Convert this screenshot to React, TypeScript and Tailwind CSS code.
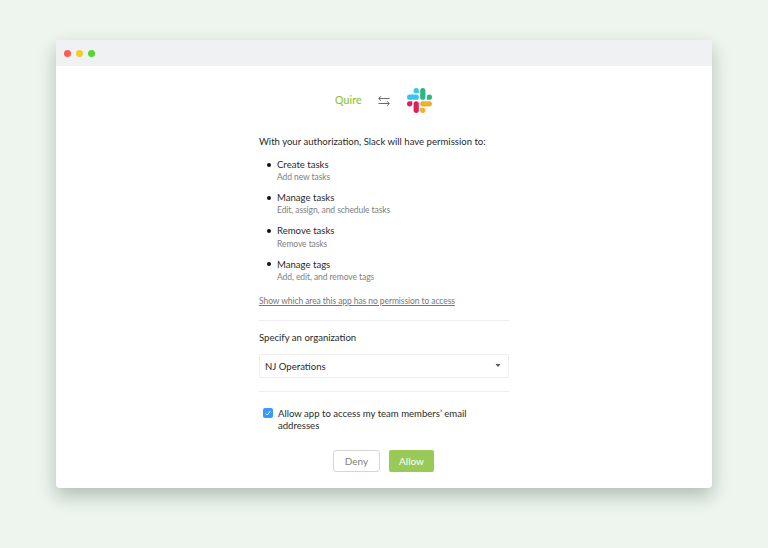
const permissions = [
  { title: "Create tasks", detail: "Add new tasks" },
  { title: "Manage tasks", detail: "Edit, assign, and schedule tasks" },
  { title: "Remove tasks", detail: "Remove tasks" },
  { title: "Manage tags", detail: "Add, edit, and remove tags" },
];

function SlackLogo() {
  return (
    <svg className="h-[25px] w-[25px]" viewBox="0 0 24 24">
      <path fill="#E01E5A" d="M5.042 15.165a2.528 2.528 0 0 1-2.52 2.523A2.528 2.528 0 0 1 0 15.165a2.527 2.527 0 0 1 2.522-2.52h2.52v2.52zM6.313 15.165a2.527 2.527 0 0 1 2.521-2.52 2.527 2.527 0 0 1 2.521 2.52v6.313A2.528 2.528 0 0 1 8.834 24a2.528 2.528 0 0 1-2.521-2.522v-6.313z" />
      <path fill="#36C5F0" d="M8.834 5.042a2.528 2.528 0 0 1-2.521-2.52A2.528 2.528 0 0 1 8.834 0a2.528 2.528 0 0 1 2.521 2.522v2.52H8.834zM8.834 6.313a2.528 2.528 0 0 1 2.521 2.521 2.528 2.528 0 0 1-2.521 2.521H2.522A2.528 2.528 0 0 1 0 8.834a2.528 2.528 0 0 1 2.522-2.521h6.312z" />
      <path fill="#2EB67D" d="M18.956 8.834a2.528 2.528 0 0 1 2.522-2.521A2.528 2.528 0 0 1 24 8.834a2.528 2.528 0 0 1-2.522 2.521h-2.522V8.834zM17.688 8.834a2.528 2.528 0 0 1-2.523 2.521 2.527 2.527 0 0 1-2.52-2.521V2.522A2.527 2.527 0 0 1 15.165 0a2.528 2.528 0 0 1 2.523 2.522v6.312z" />
      <path fill="#ECB22E" d="M15.165 18.956a2.528 2.528 0 0 1 2.523 2.522A2.528 2.528 0 0 1 15.165 24a2.527 2.527 0 0 1-2.52-2.522v-2.522h2.52zM15.165 17.688a2.527 2.527 0 0 1-2.52-2.523 2.526 2.526 0 0 1 2.52-2.52h6.313A2.527 2.527 0 0 1 24 15.165a2.528 2.528 0 0 1-2.522 2.523h-6.313z" />
    </svg>
  );
}

function ExchangeIcon() {
  return (
    <svg className="ml-4 mr-[17px] h-3 w-3" viewBox="0 0 12 12" fill="none" stroke="#6b6b6b" strokeWidth="1">
      <path d="M11.5 3.5H.8M3 1.2 .7 3.5 3 5.8M.5 8.5h10.7M9 6.2l2.3 2.3L9 10.8" />
    </svg>
  );
}

export default function App() {
  return (
    <div className="h-[548px] w-[768px] bg-[#edf5ee] px-14 pt-10 font-['Lato',sans-serif] text-[#2a2a2a]">
      <div className="h-[448px] overflow-hidden rounded-[4px] bg-white shadow-[0_8px_18px_rgba(10,30,10,0.26)]">
        <header className="flex h-[26px] items-center gap-[5px] bg-[#eff1f3] pl-2 pt-px">
          <span className="h-[7px] w-[7px] rounded-full bg-[#ff5b50]" />
          <span className="h-[7px] w-[7px] rounded-full bg-[#f6c92e]" />
          <span className="h-[7px] w-[7px] rounded-full bg-[#55d82c]" />
        </header>
        <main className="ml-[203px] w-[250px] whitespace-nowrap pt-[22px] text-[9.57px] leading-[12px]">
          <div className="flex h-[25px] items-center pl-[76px]">
            <svg className="h-4 w-[27px]" viewBox="0 0 27 16">
              <text x="0" y="11.4" textLength="26.5" lengthAdjust="spacing" fill="#8cc534" stroke="#8cc534" strokeWidth="0.12" className="font-['Lato',sans-serif] text-[10.5px]">Quire</text>
            </svg>
            <ExchangeIcon />
            <SlackLogo />
          </div>
          <p className="mt-[23px]">With your authorization, Slack will have permission to:</p>
          <ul className="mt-[10px] flex flex-col gap-[8.33px] pl-2">
            {permissions.map((p) => (
              <li key={p.title} className="flex gap-[6px]">
                <span className="mt-[4.5px] h-1 w-1 shrink-0 rounded-full bg-[#111]" />
                <div>
                  <div className="pt-[0.8px]">{p.title}</div>
                  <div className="mt-[1.2px] text-[8.5px] leading-[11px] tracking-[-0.075px] text-[#808080]">{p.detail}</div>
                </div>
              </li>
            ))}
          </ul>
          <a className="mt-[12px] block text-[8.5px] leading-[12px] tracking-[-0.075px] text-[#777] underline">Show which area this app has no permission to access</a>
          <hr className="mt-[13px] border-[#eeeeee]" />
          <p className="mt-[11px]">Specify an organization</p>
          <div className="mt-[10px] flex h-6 items-center justify-between rounded-[2px] border border-[#eeeeee] pl-[5px] pr-[7px]">
            <span className="pt-[2px]">NJ Operations</span>
            <svg className="h-[3px] w-[6px]" viewBox="0 0 6 3"><path d="M0.5 0h5L3 3z" fill="#555" /></svg>
          </div>
          <hr className="mt-[13px] border-[#eeeeee]" />
          <label className="mt-[16px] flex gap-[5px] pl-[4px] leading-[12px]">
            <span className="flex h-[10px] w-[10px] items-center justify-center rounded-[2px] bg-[#3b99fc]">
              <svg className="h-[10px] w-[10px]" viewBox="0 0 10 10" fill="none" stroke="white" strokeWidth="1"><path d="M2.8 5.5 4.3 7 7.3 3" /></svg>
            </span>
            <span>Allow app to access my team members’ email<br />addresses</span>
          </label>
          <div className="mt-[18px] flex gap-[9px] pl-[74px] text-[10px]">
            <button className="h-[22px] w-[47px] rounded-[3px] border border-[#d6d6d6] text-[#808080]">Deny</button>
            <button className="h-[22px] w-[45px] rounded-[2px] bg-[#99c957] text-white">Allow</button>
          </div>
        </main>
      </div>
    </div>
  );
}
